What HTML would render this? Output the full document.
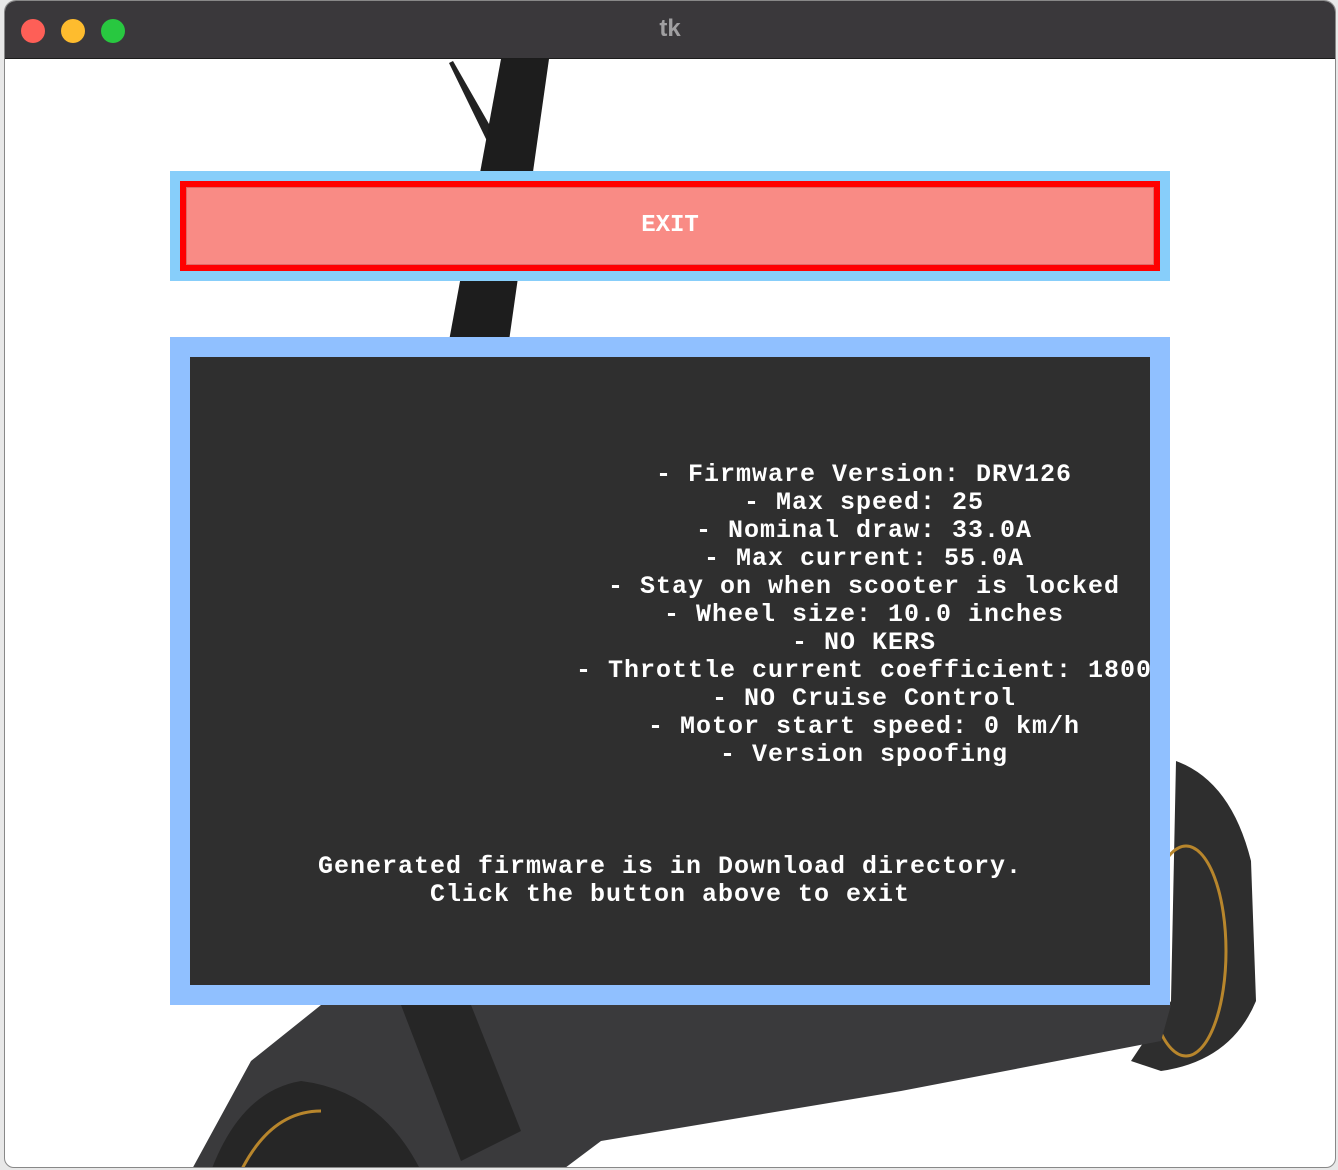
<!DOCTYPE html>
<html><head><meta charset="utf-8"><style>
html,body{margin:0;padding:0;width:1338px;height:1170px;overflow:hidden;background:#e8e8e8}
.win{position:absolute;left:4px;top:0px;width:1332px;height:1168px;background:#fff;border-radius:12px 12px 10px 10px;overflow:hidden;border:1px solid #888;box-sizing:border-box}
.tb{position:absolute;left:0;top:0;right:0;height:57px;background:#3a383b;border-bottom:1px solid #1c1c1c}
.dot{position:absolute;top:18px;width:24px;height:24px;border-radius:50%}
.title{position:absolute;top:14px;left:0;right:0;text-align:center;color:#a09fa1;font:bold 24px "Liberation Sans",sans-serif}
.t{font-family:"Liberation Mono",monospace;font-weight:bold;color:#fff;font-size:25px;letter-spacing:1px;line-height:28px;white-space:pre;text-align:center;position:absolute}
</style></head><body>
<div class="win">
<svg style="position:absolute;left:-4px;top:0" width="1338" height="1170">
<path d="M452 60 L492 130 L486 140 L448 62Z" fill="#222"/>
<path d="M500 58 L548 58 L508 340 L448 340Z" fill="#1d1d1d"/>
<path d="M1175 760 Q1230 780 1250 860 L1255 1000 Q1230 1060 1160 1070 L1130 1060 L1170 1000Z" fill="#2e2e2e"/>
<ellipse cx="1185" cy="950" rx="40" ry="105" fill="none" stroke="#b8862c" stroke-width="3"/>
<path d="M190 1170 L250 1060 L320 1004 L1170 1004 L1160 1040 L900 1090 L600 1140 L560 1170Z" fill="#3a3a3c"/>
<path d="M400 1004 L470 1004 L520 1130 L460 1160Z" fill="#262626"/>
<path d="M210 1170 Q240 1090 300 1080 Q380 1090 420 1170Z" fill="#262626"/>
<path d="M240 1170 Q270 1110 320 1110" fill="none" stroke="#b8862c" stroke-width="3"/>
</svg>
<div class="tb">
<div class="dot" style="left:16px;background:#fe5f57"></div>
<div class="dot" style="left:56px;background:#febc2e"></div>
<div class="dot" style="left:96px;background:#28c840"></div>
<div class="title">tk</div>
</div>
<div style="position:absolute;left:165px;top:170px;width:1000px;height:110px;background:#87cefa"></div>
<div style="position:absolute;left:175px;top:180px;width:980px;height:90px;background:#ff0000"></div>
<div style="position:absolute;left:181px;top:186px;width:968px;height:78px;background:#f98b85;border:1px solid #e06a66;box-sizing:border-box"></div>
<div style="position:absolute;left:175px;top:211px;width:980px;text-align:center;color:#fff;font:bold 24px 'Liberation Mono',monospace">EXIT</div>
<div style="position:absolute;left:165px;top:336px;width:1000px;height:668px;background:#90c0ff"></div>
<div style="position:absolute;left:185px;top:356px;width:960px;height:628px;background:#2f2f2f"></div>
<div class="t" style="left:400px;width:918px;top:460px">- Firmware Version: DRV126
- Max speed: 25
- Nominal draw: 33.0A
- Max current: 55.0A
- Stay on when scooter is locked
- Wheel size: 10.0 inches
- NO KERS
- Throttle current coefficient: 1800
- NO Cruise Control
- Motor start speed: 0 km/h
- Version spoofing</div>
<div class="t" style="left:185px;width:960px;top:852px">Generated firmware is in Download directory.
Click the button above to exit</div>
</div>
</body></html>
